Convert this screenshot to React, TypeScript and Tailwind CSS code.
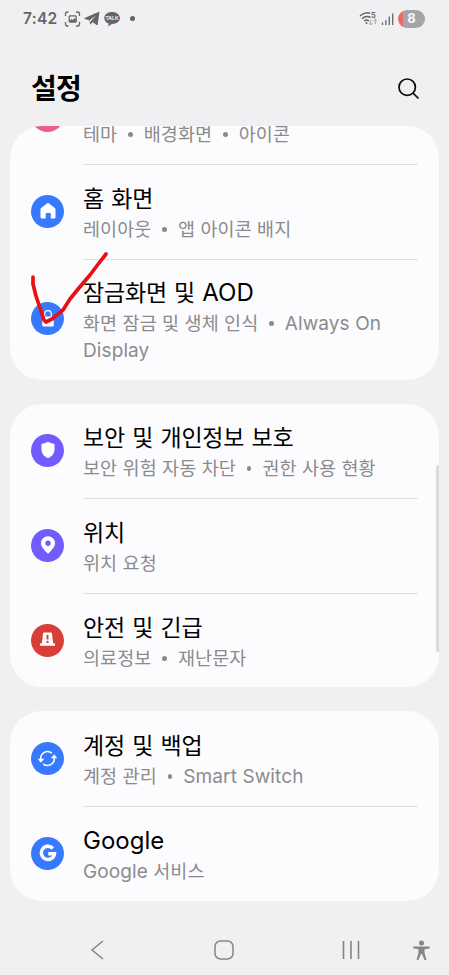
import type { ReactNode } from "react";

const fonts = "font-['Inter','Noto_Sans_CJK_KR',sans-serif]";

function Disc({ color, children }: { color: string; children?: ReactNode }) {
  return (
    <span className={`-mt-[3px] flex size-[33px] shrink-0 items-center justify-center rounded-full ${color}`}>
      {children}
    </span>
  );
}

function Dot() {
  return <span className="mr-[11px] ml-[11px] inline-block size-[4.5px] rounded-full bg-[#8b8b8d] align-[4.5px]" />;
}

function TitleLatin({ children }: { children: ReactNode }) {
  return <span className="text-[24px] leading-none font-normal tracking-[0px]">{children}</span>;
}

function SubLatin({ children }: { children: ReactNode }) {
  return <span className="text-[19px] leading-none tracking-[0.1px]">{children}</span>;
}

function Row({
  icon,
  title,
  children,
  tall = false,
  line = true,
}: {
  icon: ReactNode;
  title: ReactNode;
  children: ReactNode;
  tall?: boolean;
  line?: boolean;
}) {
  return (
    <div className={`flex shrink-0 items-center px-[21px] ${tall ? "h-[120px]" : "h-[95px]"}`}>
      {icon}
      <div className={`ml-[19px] flex h-full flex-1 flex-col ${tall ? "pt-[18px]" : "pt-[19px]"} ${line ? "border-b border-[#dfdfe1]" : ""}`}>
        <h2 className="h-[32px] text-[23px] leading-[31px] tracking-[-0.2px] whitespace-nowrap text-black [word-spacing:1px]">{title}</h2>
        <p className="text-[18.5px] leading-[27px] tracking-[0.1px] whitespace-nowrap text-[#8b8b8d] [word-spacing:0px]">{children}</p>
      </div>
    </div>
  );
}

function HomeIcon() {
  return (
    <svg width="18" height="18" viewBox="0 0 18 18" fill="#fff">
      <path d="M8 1.4q1-.8 2 0l5.800 4.700q.7.500.7 1.400v7.700q0 1.300-1.300 1.300h-3.400v-4.800q0-.8-.8-.8H7.500q-.8 0-.8.800v4.800H2.800q-1.300 0-1.300-1.300V7.500q0-.9.700-1.400z" />
    </svg>
  );
}

function LockIcon() {
  return (
    <svg width="18" height="20" viewBox="0 0 18 20">
      <path d="M5.700 8V5a3.300 3.300 0 0 1 6.600 0v3" fill="none" stroke="#fff" strokeWidth="1.200" />
      <rect x="3.300" y="7.500" width="11.400" height="10" rx="1.200" fill="#fff" />
    </svg>
  );
}

function ShieldIcon() {
  return (
    <svg width="16" height="18" viewBox="0 0 16 18" fill="#fff">
      <path d="M8 .8q3 1.700 5.700 1.900.8.100.8.900v5.200q0 5.500-6.500 8.500-6.500-3-6.500-8.500V3.600q0-.8.800-.9Q5 2.500 8 .8Z" />
    </svg>
  );
}

function PinIcon() {
  return (
    <svg width="16" height="20" viewBox="0 0 16 20" fill="#fff">
      <path fillRule="evenodd" d="M8 1.200a7 7 0 0 1 7 7c0 4.300-4 7.300-6.400 10q-.6.700-1.200 0C5 15.500 1 12.500 1 8.200a7 7 0 0 1 7-7Zm0 4.300a2.700 2.700 0 1 0 0 5.400 2.700 2.700 0 0 0 0-5.400Z" />
    </svg>
  );
}

function SirenIcon() {
  return (
    <svg width="17" height="16" viewBox="0 0 17 16">
      <path d="M5.200.500h6.600q1 0 1.200 1l1.100 9.800h.9q1 0 1 1V13.700H1v-1.400q0-1 1-1h.9L4 1.500q.2-1 1.200-1Z" fill="#fff" />
      <path d="M8.500 2.800V7.500" stroke="#d93d38" strokeWidth="1.900" />
      <circle cx="8.500" cy="9.900" r="1.200" fill="#d93d38" />
    </svg>
  );
}

function SyncIcon() {
  return (
    <svg width="21" height="19" viewBox="0 0 21 19">
      <path d="M3.800 10A6.700 6.700 0 0 1 14.800 4.200M17.200 9A6.700 6.700 0 0 1 6.200 14.800" fill="none" stroke="#fff" strokeWidth="1.600" />
      <path d="M17.100 5.500l2.900 3.600h-5.800zM3.900 13.500 1 9.900h5.800z" fill="#fff" stroke="#fff" strokeWidth=".4" strokeLinejoin="round" />
    </svg>
  );
}

function GoogleIcon() {
  return (
    <svg width="18" height="18" viewBox="0 0 18 18" fill="none" stroke="#fff" strokeWidth="3.400">
      <path d="M13.900 4.500A6.600 6.600 0 1 0 15.500 9.700H9.300" />
    </svg>
  );
}

function StatusBar() {
  return (
    <header className="flex h-[37px] shrink-0 items-center pr-[24px] pl-[23px] text-[#656567]">
      <span className="w-[41px] text-[15.500px] leading-none font-semibold tracking-[0.3px]">7:42</span>
      <svg width="17" height="16" viewBox="0 0 17 16" fill="none" stroke="currentColor" strokeWidth="1.300">
        <path d="M1.500 5V3q0-2 2-2h1M12 1h1.500q2 0 2 2v2M15.500 11v2q0 2-2 2H12M4.500 15h-1q-2 0-2-2v-2" />
        <rect x="5.200" y="4.800" width="7" height="6.400" rx="1" />
        <path d="m5.500 10 2-2 1.300 1 1.700-2 1.500 2v2h-6z" fill="currentColor" stroke="none" />
      </svg>
      <svg className="ml-[3px]" width="16" height="15" viewBox="0 0 16 15" fill="currentColor">
        <path d="M.6 7 14.500.900q1-.4.900.6l-1.700 11.900q-.2 1.100-1.200.5L8.600 11l-1.500 2q-.7.600-1-.4L5.200 9.300.8 7.900q-.8-.4-.2-.9Z" />
        <path d="m5.500 9.200 6.600-4.700-5 5.300-.4 1.700z" fill="#f0f0f2" />
      </svg>
      <svg className="ml-[3px]" width="18" height="16" viewBox="0 0 18 16">
        <path d="M9 1c4.600 0 7.900 2.600 7.900 6.100S13.600 13 9 13l-3.900 2.300.5-2.800C3 11.600 1.300 9.600 1.300 7 1.300 3.600 4.500 1 9 1Z" fill="#656567" />
        <text x="9" y="9" fontSize="5" fontWeight="700" fontFamily="Inter" textAnchor="middle" fill="#f0f0f2">TALK</text>
      </svg>
      <span className="ml-[9px] size-[5px] rounded-full bg-[#656567]" />
      <svg className="ml-auto" width="19" height="16" viewBox="0 0 19 16" fill="none" stroke="#656567">
        <path d="M1 5Q6 .3 11 2.300M3 7.700Q7.200 4 11.500 6.500M5.200 10Q7.500 8.200 10 10" strokeWidth="1.500" />
        <circle cx="7.500" cy="12" r="1" fill="#656567" stroke="none" />
        <text x="12" y="7" fontSize="7.500" fontWeight="700" fontFamily="Inter" fill="#656567" stroke="none">5</text>
        <path d="M11.800 9v5m-1.700-1.700L11.800 14l1.700-1.700M16.300 13V8m-1.700 1.700L16.300 8l1.700 1.700" stroke="#a5a5a7" />
      </svg>
      <svg className="ml-[3px]" width="13" height="14" viewBox="0 0 13 14" fill="none" stroke="#656567" strokeWidth="1.300">
        <path d="M1.500 13v-2.500M4.900 13V8M8.300 13V4.500M11.700 13V1.500" />
      </svg>
      <span className="ml-[4px] flex h-[18px] w-[27px] items-center justify-center rounded-full bg-[linear-gradient(90deg,#eb6d67_0_5px,#a5a5a7_5px)] text-[13px] leading-none font-bold text-[#f7f7f8]">8</span>
    </header>
  );
}

export default function App() {
  return (
    <div className={`relative flex h-[975px] w-[449px] flex-col overflow-hidden bg-[#f0f0f2] ${fonts}`}>
      <StatusBar />
      <div className="flex h-[89px] shrink-0 items-center justify-between pr-[28px] pl-[31px]">
        <h1 className="pt-[14px] text-[28px] leading-[40px] font-bold tracking-[-0.7px] text-black">설정</h1>
        <svg className="mt-[15px]" width="24" height="24" viewBox="0 0 24 24" fill="none" stroke="#0b0b0b" strokeWidth="1.700">
          <circle cx="10.200" cy="10.200" r="8.200" />
          <path d="m15.800 15.800 5.700 5.700" />
        </svg>
      </div>

      <main className="flex flex-col gap-[24px] px-[10px]">
        <section className="flex h-[254px] flex-col overflow-hidden rounded-[32px] bg-[#fcfcfe]">
          <div className="flex h-[39px] shrink-0 items-start px-[21px]">
            <svg className="shrink-0" width="33" height="6" viewBox="0 27 33 6">
              <circle cx="16.500" cy="16.500" r="16.500" fill="#ee5c88" />
            </svg>
            <div className="ml-[19px] h-full flex-1 border-b border-[#dfdfe1]">
              <p className="-mt-[5px] text-[18.5px] leading-[27px] tracking-[0.1px] whitespace-nowrap text-[#8b8b8d]">
                테마<Dot />배경화면<Dot />아이콘
              </p>
            </div>
          </div>
          <Row icon={<Disc color="bg-[#387aff]"><HomeIcon /></Disc>} title="홈 화면">
            레이아웃<Dot />앱 아이콘 배지
          </Row>
          <Row tall line={false} icon={<Disc color="bg-[#387aff]"><LockIcon /></Disc>} title={<>잠금화면 및 <TitleLatin>AOD</TitleLatin></>}>
            화면 잠금 및 생체 인식<Dot /><SubLatin>Always On</SubLatin><br /><SubLatin>Display</SubLatin>
          </Row>
        </section>
        <section className="h-[283px] overflow-hidden rounded-[32px] bg-[#fcfcfe]">
          <Row icon={<Disc color="bg-[#735cff]"><ShieldIcon /></Disc>} title="보안 및 개인정보 보호">
            보안 위험 자동 차단<Dot />권한 사용 현황
          </Row>
          <Row icon={<Disc color="bg-[#735cff]"><PinIcon /></Disc>} title="위치">위치 요청</Row>
          <Row line={false} icon={<Disc color="bg-[#d93d38]"><SirenIcon /></Disc>} title="안전 및 긴급">
            의료정보<Dot />재난문자
          </Row>
        </section>
        <section className="h-[190px] overflow-hidden rounded-[32px] bg-[#fcfcfe] pt-px">
          <Row icon={<Disc color="bg-[#387aff]"><SyncIcon /></Disc>} title="계정 및 백업">
            계정 관리<Dot /><SubLatin>Smart Switch</SubLatin>
          </Row>
          <Row line={false} icon={<Disc color="bg-[#387aff]"><GoogleIcon /></Disc>} title={<TitleLatin>Google</TitleLatin>}>
            <SubLatin>Google</SubLatin> 서비스
          </Row>
        </section>
      </main>

      <nav className="flex flex-1 items-center pt-[24px] pl-[90px]">
        <svg width="15" height="22" viewBox="0 0 15 22" fill="none" stroke="#858587" strokeWidth="1.500">
          <path d="M13 2 2 11l11 9" />
        </svg>
        <svg className="ml-[108px]" width="22" height="22" viewBox="0 0 22 22" fill="none" stroke="#858587" strokeWidth="1.500">
          <rect x="2" y="2" width="18" height="18" rx="5.500" />
        </svg>
        <svg className="ml-[106px]" width="20" height="20" viewBox="0 0 20 20" stroke="#858587" strokeWidth="1.600">
          <path d="M2.500 1v18M10 1v18M17.500 1v18" />
        </svg>
        <svg className="ml-[51px]" width="19" height="21" viewBox="0 0 19 21" fill="#858587">
          <circle cx="9.500" cy="3" r="2.500" />
          <path d="M2 6.500h15q1 0 1 1t-1 1l-4.500.700v3.500l1.800 6.500q.2 1-.8 1t-1.200-.8L10 14h-1l-2.300 5.400q-.3.800-1.200.8t-.8-1l1.800-6.500V9.200L2 8.500q-1 0-1-1t1-1Z" />
        </svg>
      </nav>

      <div className="absolute top-[465px] left-[436px] h-[187px] w-[3px] rounded-full bg-[#dcdcde]" />
      <svg className="absolute top-[245px] left-[25px]" width="90" height="85" viewBox="0 0 90 85" fill="none" stroke="#e90f13" strokeWidth="3.700" strokeLinecap="round" strokeLinejoin="round">
        <path d="M8 32v7l3 12 4 12 4 12 2 2 6-3 11-9 7-11 9-11 11-13 9-12 7-9" />
      </svg>
    </div>
  );
}
